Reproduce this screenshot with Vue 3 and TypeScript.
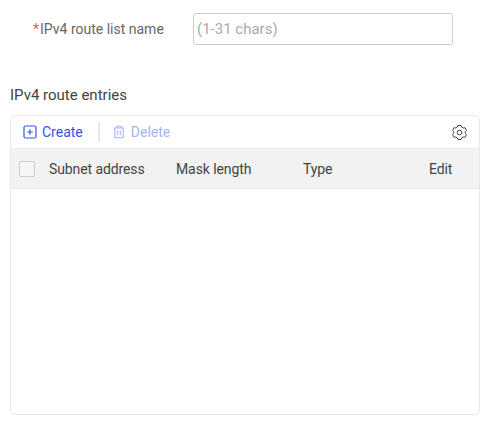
<script setup lang="ts">
interface Column {
  label: string
  width: number
}

const columns: Column[] = [
  { label: 'Subnet address', width: 127 },
  { label: 'Mask length', width: 127 },
  { label: 'Type', width: 126 },
  { label: 'Edit', width: 50 }
]
</script>

<template>
  <div class="page">
    <div class="form-row">
      <label class="form-label"><span class="required">*</span>IPv4 route list name</label>
      <input class="form-input" type="text" placeholder="(1-31 chars)" />
    </div>

    <div class="section-title">IPv4 route entries</div>

    <div class="card">
      <div class="toolbar">
        <button class="tool-btn" type="button">
          <svg width="14" height="14" viewBox="0 0 14 14" fill="none" stroke="#2f54eb" stroke-width="1.2">
            <rect x="1" y="1" width="12" height="12" rx="1.5" />
            <path d="M7 4.2v5.6M4.2 7h5.6" />
          </svg>
          <span>Create</span>
        </button>
        <span class="divider"></span>
        <button class="tool-btn disabled" type="button">
          <svg width="14" height="14" viewBox="0 0 14 14" fill="none" stroke="#a6b5f5" stroke-width="1.1">
            <path d="M1.5 3h11M5 3V1.200h4V3M2.800 3v9.800h8.400V3M5.700 5.500v4.800M8.300 5.500v4.800" />
          </svg>
          <span>Delete</span>
        </button>
        <svg class="gear" width="15" height="15" viewBox="0 0 15 15" fill="none" stroke="#444" stroke-width="1">
          <path d="M5.900.5h3.200l.6 1.600 1.500.9 1.700-.3 1.500 2.600-1.100 1.300v1.800l1.100 1.300-1.500 2.600-1.700-.3-1.500.9-.6 1.600H5.900l-.6-1.600-1.500-.9-1.700.3L.6 9.700l1.100-1.300V6.600L.6 5.300l1.500-2.600 1.700.3 1.500-.9z" />
          <circle cx="7.500" cy="7.500" r="2.300" />
        </svg>
      </div>

      <div class="table-head">
        <span class="checkbox"></span>
        <span
          v-for="col in columns"
          :key="col.label"
          class="head-cell"
          :style="{ width: col.width + 'px' }"
        >{{ col.label }}</span>
      </div>

      <div class="table-body"></div>
    </div>
  </div>
</template>

<style>
body {
  background: #fff;
}
</style>

<style scoped>
.page {
  width: 494px;
  height: 427px;
  overflow: hidden;
  padding: 13px 14px 0 10px;
  box-sizing: border-box;
  font-family: Roboto, "Noto Sans", sans-serif;
  font-size: 14px;
  color: #333;
}

.form-row {
  display: flex;
  align-items: center;
  height: 32px;
}

.form-label {
  width: 183px;
  box-sizing: border-box;
  padding-left: 23px;
  color: #666;
}

.required {
  color: #e05a5a;
  margin-right: 1px;
}

.form-input {
  width: 260px;
  height: 32px;
  box-sizing: border-box;
  border: 1px solid #ccc;
  border-radius: 3px;
  padding: 0 3px;
  outline: none;
  font: inherit;
  font-size: 15px;
  color: #333;
}

.form-input::placeholder {
  color: #aaa;
  opacity: 1;
}

.section-title {
  margin-top: 39px;
  height: 19px;
  line-height: 22px;
  font-size: 15px;
  color: #444;
}

.card {
  margin-top: 12px;
  width: 470px;
  height: 300px;
  box-sizing: border-box;
  border: 1px solid #e8e8e8;
  border-radius: 5px;
  display: flex;
  flex-direction: column;
}

.toolbar {
  height: 32px;
  display: flex;
  align-items: center;
  padding: 0 12px;
  flex: none;
}

.tool-btn {
  display: flex;
  align-items: center;
  gap: 5px;
  border: none;
  background: none;
  padding: 0;
  font: inherit;
  color: #2f54eb;
  cursor: pointer;
}

.tool-btn.disabled {
  color: #a6b5f5;
  cursor: not-allowed;
}

.divider {
  width: 2px;
  height: 20px;
  background: #e8e8e8;
  margin: 0 12px 0 15px;
}

.gear {
  margin-left: auto;
}

.table-head {
  flex: none;
  height: 41px;
  box-sizing: border-box;
  background: #f2f2f2;
  border-top: 1px solid #ebebeb;
  border-bottom: 1px solid #e8e8e8;
  display: flex;
  align-items: center;
  padding-left: 8px;
}

.checkbox {
  width: 16px;
  height: 16px;
  box-sizing: border-box;
  border: 1px solid #ccc;
  border-radius: 2px;
  background: #f5f5f5;
  margin-right: 14px;
  flex: none;
}

.head-cell {
  flex: none;
  color: #444;
  letter-spacing: -0.1px;
}

.table-body {
  flex: 1;
}
</style>
